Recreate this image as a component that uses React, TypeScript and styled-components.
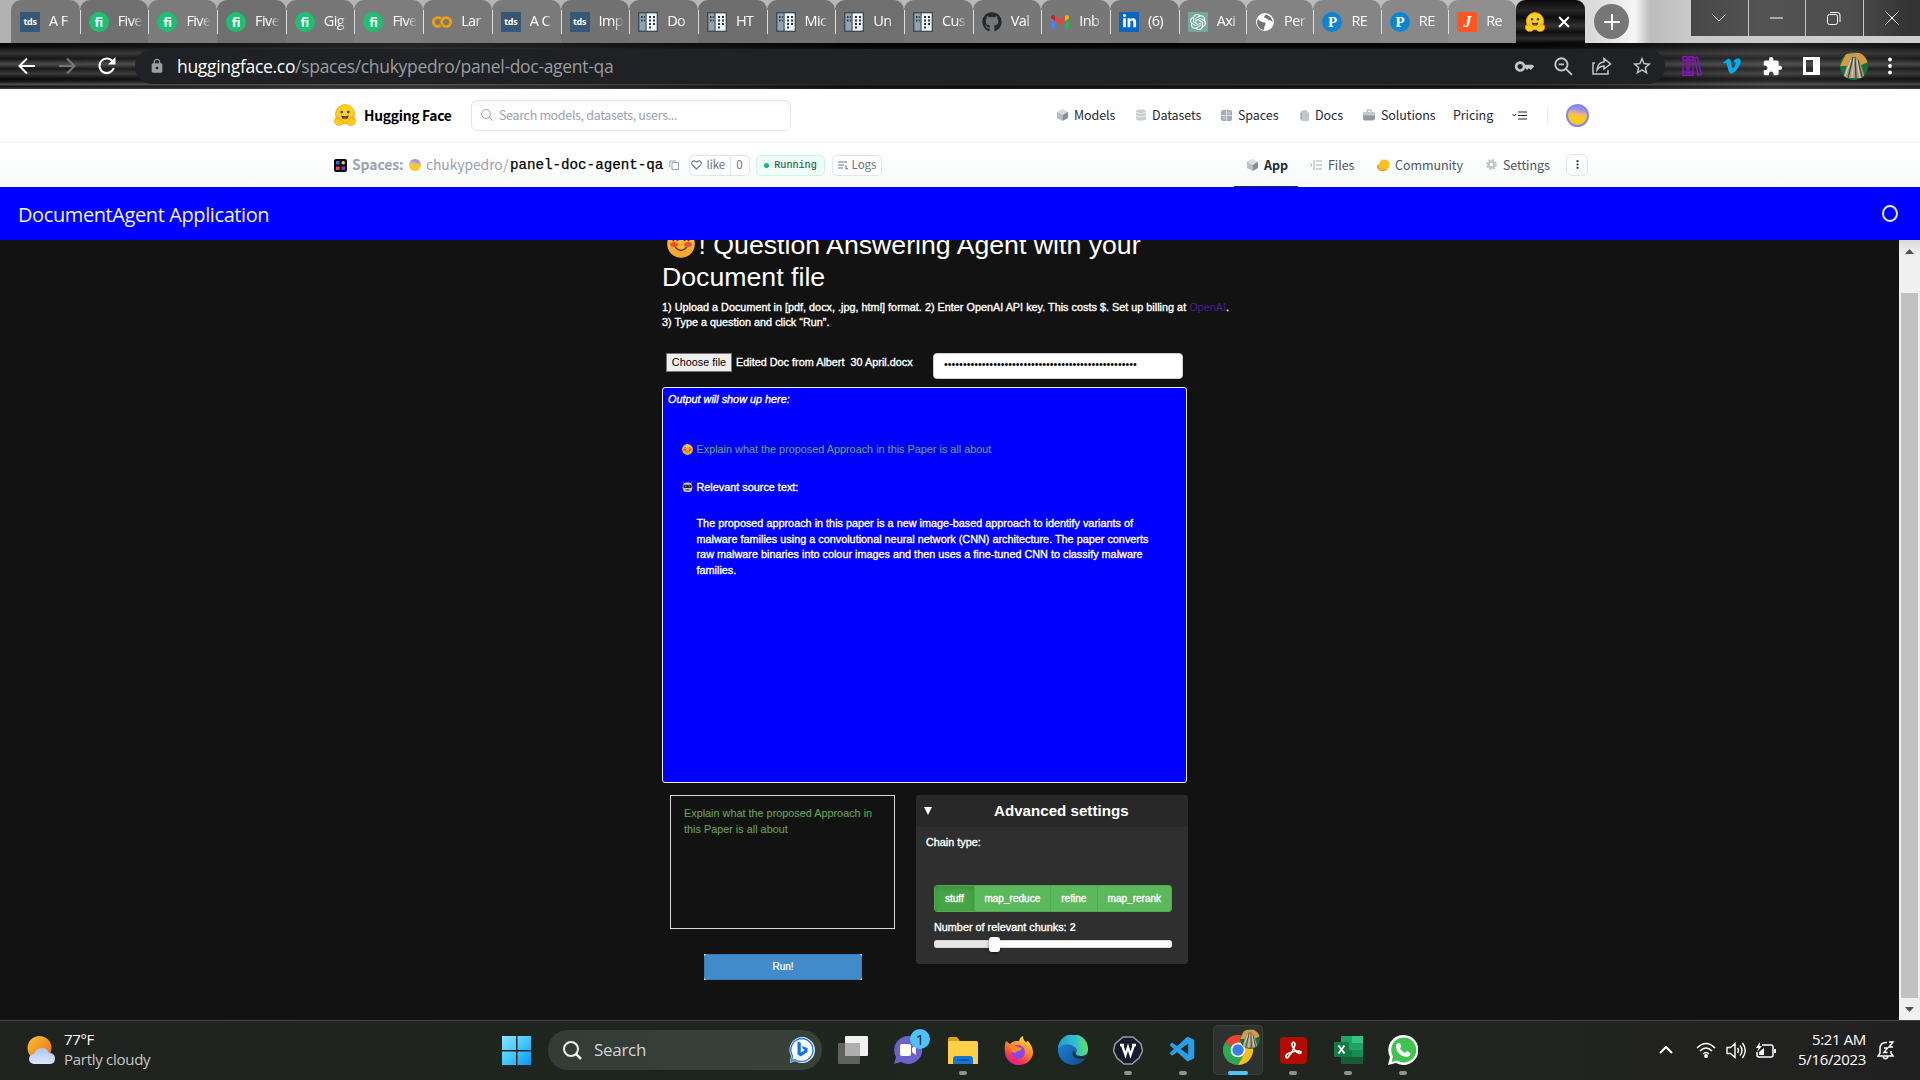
import React from "react";
import styled, { createGlobalStyle, css } from "styled-components";
import { FaGithub, FaVimeoV, FaLinkedinIn } from "react-icons/fa";
import { SiGooglecolab, SiOpenai } from "react-icons/si";
import { VscVscode } from "react-icons/vsc";
import { MdKey, MdLock, MdStarBorder, MdExtension } from "react-icons/md";

const ui = '"Open Sans", "Noto Sans", sans-serif';
const source = '"Noto Sans CJK SC", "Noto Sans", sans-serif';
const arial = '"Liberation Sans", Arial, sans-serif';
const mono = '"Liberation Mono", "DejaVu Sans Mono", monospace';

const Global = createGlobalStyle`
  * { box-sizing: border-box; }
  body { margin: 0; background: #111; overflow: hidden; }
  svg { display: block; flex: none; }
`;

const Screen = styled.div`
  width: 1920px;
  height: 1080px;
  display: grid;
  grid-template-rows: 43px 46px 54px 44px 53px 780px 60px;
  overflow: hidden;
`;

const streaks = css`
  background:
    linear-gradient(90deg, rgba(0, 0, 0, 0) 0%, rgba(120, 120, 120, 0.25) 22%, rgba(0, 0, 0, 0.5) 45%, rgba(0, 0, 0, 0.3) 80%, rgba(110, 110, 110, 0.25) 92%, rgba(60, 60, 60, 0.2) 100%),
    linear-gradient(180deg, #050505 0, #0a0a0a 8%, #333 22%, #141414 34%, #4a4a4a 46%, #161616 56%, #383838 66%, #080808 78%, #191919 84%, #4c4c4c 90%, #101010 95%, #444 100%);
`;

/* ---------- browser tab strip ---------- */

const TabStrip = styled.div`
  display: flex;
  padding-left: 11px;
  background: linear-gradient(90deg, #b2b2b2 0, #bdbdbd 1480px, #d9d9d9 1590px, #f6f6f6 1635px, #bcbcbc 1650px, #c9c9c9 1690px, #cfcfcf 100%);
`;
const Tabs = styled.div`
  display: flex;
  width: 1505px;
`;
const Tab = styled.div<{ $tone: string; $w: number }>`
  flex: none;
  width: ${(p) => p.$w}px;
  height: 43px;
  display: flex;
  align-items: center;
  border-radius: 10px 10px 0 0;
  background: ${(p) => p.$tone};
`;
const TabRule = styled.i<{ $hidden?: boolean }>`
  flex: none;
  width: 1px;
  height: 24px;
  margin-right: 8px;
  background: ${(p) => (p.$hidden ? "transparent" : "#dcdcdc")};
`;
const TabLabel = styled.span`
  width: 26px;
  margin: -2px 0 0 9px;
  white-space: nowrap;
  color: #fff;
  font: 400 14.500px/20px ${ui};
  letter-spacing: -0.600px;
  mask-image: linear-gradient(90deg, #000 55%, rgba(0, 0, 0, 0.15) 90%);
`;
const ActiveTab = styled.div`
  width: 69px;
  height: 43px;
  display: flex;
  align-items: center;
  gap: 13px;
  padding-left: 9px;
  border-radius: 9px 9px 0 0;
  background: linear-gradient(180deg, #0a0a0a, #262626 25%, #0c0c0c 40%, #333 60%, #0e0e0e 75%, #2c2c2c 90%, #080808);
`;
const NewTab = styled.div`
  width: 35px;
  height: 35px;
  margin: 4px 0 0 9px;
  border-radius: 50%;
  background: #777;
  display: grid;
  place-items: center;
`;
const WindowControls = styled.div`
  display: flex;
  width: 229px;
  height: 36px;
  margin-left: auto;
  background: linear-gradient(90deg, #474747, #535353 30%, #4d4d4d 70%, #333 95%);
`;
const Control = styled.div`
  flex: 1;
  display: grid;
  place-items: center;
  border-left: 1px solid #c6c6c6;
  &:first-child { border-left: 0; }
`;
const Favicon = styled.span<{ $bg?: string; $round?: boolean; $size?: number; $serif?: boolean }>`
  flex: none;
  width: 20px;
  height: 20px;
  display: grid;
  place-items: center;
  border-radius: ${(p) => (p.$round ? "50%" : "1px")};
  background: ${(p) => p.$bg || "transparent"};
  color: #fff;
  font: 700 ${(p) => p.$size || 10}px/18px ${(p) => (p.$serif ? '"Liberation Serif", serif' : ui)};
  letter-spacing: -0.3px;
`;

const HugIcon = ({ size = 20 }: { size?: number }) => (
  <svg width={size} height={size} viewBox="0 0 24 24">
    <circle cx="12" cy="11" r="10.3" fill="#ffd21e" stroke="#ff9d0b" strokeWidth="1" />
    <circle cx="8.4" cy="8.8" r="1.5" fill="#3a3b45" />
    <circle cx="15.6" cy="8.8" r="1.5" fill="#3a3b45" />
    <path d="M8 12.300c2.300 1.300 5.700 1.300 8 0 0 2.800-1.300 4.300-4 4.300s-4-1.500-4-4.300z" fill="#3a3b45" />
    <path d="M9.800 15.400q2.200-1.400 4.400 0-2.200 2.200-4.400 0z" fill="#ef4e4e" />
    <path d="M1.500 15.500l2 1 .4-2.500c1.300-.6 1.800.8 1.700 2.300l3.200 1.500c2.200 1.600 1.500 4.800-1.200 5.200-2.600.5-6-.1-6.600-2.600-.6-1.400-.5-3.800.5-4.900zM22.500 15.500l-2 1-.4-2.500c-1.300-.6-1.800.8-1.700 2.300l-3.200 1.500c-2.200 1.600-1.500 4.800 1.200 5.200 2.600.5 6-.1 6.600-2.600.6-1.400.5-3.800-.5-4.900z" fill="#ffd21e" stroke="#ff9d0b" strokeWidth="1" />
  </svg>
);
const Building = () => (
  <svg width="20" height="20" viewBox="0 0 20 20">
    <rect x=".7" y=".7" width="18.600" height="18.600" fill="#8fa3b3" stroke="#3f4c55" strokeWidth="1.400" />
    <rect x="8.500" y="1.500" width="10" height="17" fill="#f2f5f7" />
    <path d="M8 1v18" stroke="#3f4c55" />
    <path d="M3 5h1.500M5.800 5h1M3 8.500h1.500M5.800 8.500h1M11 5h2M15 5h2M11 8.500h2M15 8.500h2M11 12h2M15 12h2M11 15.500h2" stroke="#2b363d" strokeWidth="1.800" />
  </svg>
);
const Gmail = () => (
  <svg width="20" height="20" viewBox="0 0 20 20">
    <path d="M1 5v10.800q0 1 1 1h3V8z" fill="#4285f4" />
    <path d="M15 17h3q1 0 1-1V5l-4 3z" fill="#34a853" />
    <path d="M5 9V4l5 4 5-4v5l-5 4z" fill="#ea4335" />
    <path d="M1 5.500Q1 3 3.200 3L5 4v5L1 6z" fill="#c5221f" />
    <path d="M19 5.500Q19 3 16.800 3L15 4v5l4-3z" fill="#fbbc04" />
  </svg>
);
const Globe = () => (
  <svg width="20" height="20" viewBox="0 0 20 20">
    <circle cx="10" cy="10" r="9" fill="#fff" />
    <path d="M3 7q3 3.500 7 3.500 1.500 2-.5 3.500L9 18Q2 16.500 2 10zM11 2.500Q8.500 4 9.500 6q3 0 4 2 3 0 4 2.500Q18 5 11 2.500z" fill="#737373" />
  </svg>
);
const Five = () => <Favicon $bg="#1dbf73" $round $size={13}>fi</Favicon>;
const Tds = () => <Favicon $bg="#355876" $size={9}>tds</Favicon>;
const PIcon = () => <Favicon $bg="#0b84d3" $round $size={15} $serif>P</Favicon>;

const tabs: [React.ReactNode, string][] = [
  [<Tds />, "A F"], [<Five />, "Five"], [<Five />, "Five"], [<Five />, "Five"], [<Five />, "Gig"], [<Five />, "Five"],
  [<SiGooglecolab size={20} color="#f9a000" />, "Lar"], [<Tds />, "A C"], [<Tds />, "Imp"],
  [<Building />, "Do"], [<Building />, "HT"], [<Building />, "Mic"], [<Building />, "Un"], [<Building />, "Cus"],
  [<FaGithub size={20} color="#24292f" />, "Val"], [<Gmail />, "Inb"],
  [<Favicon $bg="#0a66c2"><FaLinkedinIn size={15} /></Favicon>, "(6)"],
  [<Favicon $bg="#74aa9c"><SiOpenai size={16} /></Favicon>, "Axi"],
  [<Globe />, "Per"], [<PIcon />, "RE"], [<PIcon />, "RE"],
  [<Favicon $bg="#ff5722" $size={16} $serif><em>J</em></Favicon>, "Re"],
];
const tones = ["#777", "#707070", "#7b7b7b", "#6f6f6f", "#767676", "#7d7d7d", "#787878", "#7a7a7a", "#727272", "#747474", "#6e6e6e", "#727272", "#6f6f6f", "#767676", "#777", "#777", "#757575", "#7b7b7b", "#838383", "#858585", "#888", "#8e8e8e"];

/* ---------- address bar ---------- */

const Toolbar = styled.div`
  ${streaks}
  display: flex;
  align-items: center;
  padding-left: 18px;
`;
const NavIcons = styled.div`
  display: flex;
  gap: 22px;
  width: 117px;
`;
const Omnibox = styled.div`
  width: 1530px;
  height: 35px;
  display: flex;
  align-items: center;
  padding: 0 12px 0 14px;
  border-radius: 18px;
  background: #202124;
  color: #c4c7c9;
`;
const Url = styled.span`
  flex: 1;
  margin: -1px 0 0 12px;
  font: 400 17.500px/24px ${ui};
  letter-spacing: -0.310px;
  color: #9a9da1;
  b { color: #fff; font-weight: 400; }
`;
const OmniActions = styled.div`
  display: flex;
  align-items: center;
  gap: 19px;
`;
const Extensions = styled.div`
  display: flex;
  align-items: center;
  gap: 20px;
  margin-left: 17px;
  color: #fff;
`;

/* ---------- Hugging Face header ---------- */

const HfBar = styled.header`
  display: flex;
  align-items: center;
  padding: 0 0 1px 334px;
  background: #fff;
  border-bottom: 1px solid #f1f2f4;
  font: 400 12.500px/20px ${source};
  letter-spacing: -0.080px;
  color: #1f2937;
`;
const Brand = styled.b`
  width: 107px;
  margin-left: 8px;
  color: #000;
  font: 700 13.800px/20px ${source};
  letter-spacing: -0.250px;
  white-space: nowrap;
`;
const SearchBox = styled.div`
  width: 320px;
  height: 31px;
  display: flex;
  align-items: center;
  gap: 6px;
  padding-left: 9px;
  border: 1px solid #e3e5e9;
  border-radius: 6px;
  background: linear-gradient(#f8f9fa, #fff 25%);
  color: #9ca3af;
  letter-spacing: -0.330px;
`;
const NavItem = styled.span<{ $w: number; $strong?: boolean; $gap?: number }>`
  width: ${(p) => p.$w}px;
  display: flex;
  align-items: center;
  gap: ${(p) => p.$gap ?? 6}px;
  white-space: nowrap;
  font-weight: ${(p) => (p.$strong ? 700 : 400)};
  color: ${(p) => (p.$strong ? "#1f2937" : "inherit")};
`;
const MainNav = styled.nav`
  display: flex;
  align-items: center;
  margin-left: 266px;
`;
const NavDivider = styled.i`
  width: 1px;
  height: 17px;
  margin-right: 18px;
  background: #e8eaed;
`;
const Avatar = styled.span<{ $size: number; $ring?: boolean }>`
  flex: none;
  width: ${(p) => p.$size}px;
  height: ${(p) => p.$size}px;
  border-radius: 50%;
  background: linear-gradient(190deg, #938ff0 20%, #f3b57f 42%, #facc15 60%);
  border: ${(p) => (p.$ring ? "2px solid #8187f0" : "0")};
`;
const SpaceBar = styled.div`
  display: flex;
  align-items: center;
  padding-left: 334px;
  background: linear-gradient(#fff, #f8fafa);
  font: 400 12.500px/18px ${source};
  letter-spacing: -0.080px;
  color: #4b5563;
`;
const SpaceLabel = styled.span<{ $w: number; $ml?: number; $bold?: boolean }>`
  width: ${(p) => p.$w}px;
  margin: -2px 0 0 ${(p) => p.$ml || 0}px;
  font: ${(p) => (p.$bold ? 700 : 400)} 13.900px/20px ${source};
  color: #9ca3af;
  white-space: nowrap;
`;
const RepoName = styled.span`
  width: 159px;
  color: #000;
  font: 400 14.200px/20px ${mono};
  letter-spacing: 0;
  -webkit-text-stroke: 0.250px #000;
`;
const Pill = styled.span<{ $w: number; $ml: number }>`
  width: ${(p) => p.$w}px;
  height: 21px;
  margin-left: ${(p) => p.$ml}px;
  display: flex;
  align-items: center;
  justify-content: center;
  gap: 4px;
  border: 1px solid #e2e5e9;
  border-radius: 5px;
  background: #fff;
  color: #6b7280;
  font: 400 11.600px/17px ${source};
`;
const PillText = styled.span`
  margin-top: -2px;
`;
const LikeCount = styled.span`
  height: 19px;
  padding: 0 5px;
  margin-left: 1px;
  border-left: 1px solid #e2e5e9;
`;
const Running = styled(Pill)`
  background: #effdf6;
  border-color: #cdf6e0;
  color: #15684c;
  gap: 5px;
  font: 400 10.100px/19px ${mono};
  letter-spacing: 0;
  -webkit-text-stroke: 0.150px #15684c;
  &::before { content: ""; width: 5px; height: 5px; border-radius: 50%; background: #10b981; }
`;
const SpaceNav = styled.nav`
  display: flex;
  align-self: stretch;
  align-items: center;
  margin-left: 352px;
  padding-bottom: 1px;
`;
const AppTab = styled.div`
  width: 64px;
  height: 44px;
  margin: 1px 12px 0 0;
  padding-left: 13px;
  display: flex;
  border-bottom: 1px solid #1f2937;
`;
const MoreButton = styled.span`
  width: 22px;
  height: 22px;
  display: grid;
  place-items: center;
  border: 1px solid #e2e5e9;
  border-radius: 6px;
`;
const Cube = () => (
  <svg width="11" height="12" viewBox="0 0 11 12">
    <path d="M5.500 0L11 2.800 5.500 6 0 2.800z" fill="#d9dce1" /><path d="M0 2.800L5.500 6v6L0 9z" fill="#b9bec6" /><path d="M11 2.800L5.500 6v6L11 9z" fill="#878d98" />
  </svg>
);
const Drum = () => (
  <svg width="10" height="12" viewBox="0 0 10 12"><rect y=".5" width="10" height="11" rx="2.500" fill="#c9cdd4" /><path d="M0 3.500q5 2 10 0M0 7q5 2 10 0" stroke="#eceef1" fill="none" /></svg>
);
const Grid4 = () => (
  <svg width="11" height="11" viewBox="0 0 11 11"><rect width="11" height="11" rx="2" fill="#a5abb5" /><path d="M5.500 0v11M0 5.500h11" stroke="#fff" strokeWidth=".7" /><circle cx="8" cy="3" r="1.400" fill="#c6cad1" /><circle cx="3" cy="8" r="1.300" fill="#c6cad1" /></svg>
);
const Pages = () => (
  <svg width="9" height="12" viewBox="0 0 9 12"><path d="M2 1.500h2Q5 0 6.500 1.500L9 4v6.500Q9 12 7.500 12h-5Q0 12 0 10V4z" fill="#c2c7ce" /><path d="M1.500 4v6" stroke="#9ca3af" /></svg>
);
const Briefcase = () => (
  <svg width="12" height="12" viewBox="0 0 12 12"><path d="M4 3V1h4v2" fill="none" stroke="#9ca3af" /><rect y="3" width="12" height="8.500" rx="2" fill="#9299a5" /><path d="M0 5q0-2 2-2h8q2 0 2 2v1.500H0z" fill="#c3c7ce" /></svg>
);
const Indent = () => (
  <svg width="12" height="10" viewBox="0 0 12 10" fill="none" stroke="#a9afb9"><path d="M.5 3.500L2 5 .5 6.500M4 0v10M6 1h6M6 5h6M6 9h6" /></svg>
);
const Gear = () => (
  <svg width="11" height="11" viewBox="0 0 11 11"><circle cx="5.500" cy="5.500" r="3" fill="none" stroke="#c0c5cd" strokeWidth="2.500" /><circle cx="5.500" cy="5.500" r="4.700" fill="none" stroke="#c0c5cd" strokeWidth="1.500" strokeDasharray="2 1.700" /></svg>
);
const Clap = () => (
  <svg width="13" height="12" viewBox="0 0 13 12"><path d="M1 6L4 1.500Q5 0 6.500 1L10 .8q2.500 1.200 2.500 4.700 0 4-3 5.500-4 1.500-7.500 0Q-.5 9 1 6z" fill="#fbbf24" /><path d="M1 6Q0 10 3 11t6.500-.5" fill="none" stroke="#f08c1a" strokeWidth="1.200" /></svg>
);

/* ---------- application ---------- */

const AppBar = styled.div`
  display: flex;
  align-items: center;
  justify-content: space-between;
  padding: 3px 22px 0 18px;
  background: #0000ff;
  color: #f0f0ff;
  font: 400 20px/28px ${ui};
  letter-spacing: -0.400px;
`;
const Ring = styled.i`
  width: 16px;
  height: 17px;
  margin-top: -4px;
  border: 2px solid #e8e8ff;
  border-radius: 50%;
`;
const Viewport = styled.div`
  display: flex;
  overflow: hidden;
  background: #121212;
`;
const Content = styled.main`
  flex: 1;
  padding-left: 662px;
  overflow: hidden;
  color: #fff;
  font: 400 10.800px/15.500px ${arial};
  letter-spacing: 0.022px;
  -webkit-text-stroke: 0.350px currentColor;
`;
const Heading = styled.h1`
  width: 525px;
  height: 64px;
  margin: -11.500px 0 7.500px;
  font: 400 26.700px/32px ${arial};
  letter-spacing: 0;
  -webkit-text-stroke: 0;
  svg { display: inline-block; margin: 0 4px 0 4.500px; vertical-align: -4px; }
`;
const Intro = styled.p`
  width: 580px;
  margin: 0 0 22px;
  line-height: 15px;
  padding-bottom: 1px;
  white-space: nowrap;
  a { color: #551a8b; -webkit-text-stroke: 0; }
`;
const InputRow = styled.div`
  display: flex;
  height: 26px;
  margin-bottom: 8px;
  padding-left: 4px;
`;
const FileButton = styled.span`
  width: 66px;
  height: 19px;
  border: 1px solid #767676;
  background: #efefef;
  color: #000;
  text-align: center;
  line-height: 17px;
  -webkit-text-stroke: 0;
`;
const FileName = styled.span`
  width: 197px;
  margin-left: 4px;
  line-height: 19px;
  white-space: pre;
`;
const Password = styled.div`
  width: 250px;
  height: 26px;
  padding-left: 10px;
  border: 1px solid #ccc;
  border-radius: 4px;
  background: #fff;
  color: #000;
  line-height: 21px;
  letter-spacing: 0;
  -webkit-text-stroke: 0;
`;
const Output = styled.section`
  width: 525px;
  height: 396px;
  padding: 4px 5px;
  border: 1px solid #f0f0f0;
  border-radius: 3px;
  background: #0000ff;
`;
const Message = styled.div<{ $top: number; $green?: boolean }>`
  display: flex;
  align-items: center;
  gap: 4px;
  margin: ${(p) => p.$top}px 0 0 13.500px;
  color: ${(p) => (p.$green ? "#66a274" : "#fff")};
  -webkit-text-stroke-width: ${(p) => (p.$green ? 0.1 : 0.35)}px;
`;
const Answer = styled.p`
  width: 470px;
  margin: 21px 0 0 28.500px;
  line-height: 15.700px;
  white-space: pre-line;
`;
const Lower = styled.div`
  display: flex;
  margin-top: 12px;
`;
const AskColumn = styled.div`
  width: 254px;
  display: flex;
  flex-direction: column;
  padding-left: 8px;
`;
const Question = styled.div`
  width: 225px;
  height: 134px;
  padding: 9px 13px;
  border: 1px solid #d8d8d8;
  color: #67a253;
  line-height: 16px;
  -webkit-text-stroke: 0.100px currentColor;
`;
const Run = styled.div`
  width: 158px;
  height: 26px;
  margin: 25px 0 0 34px;
  background: #fff;
  span {
    display: block;
    height: 26px;
    border: 1px solid #357ebd;
    border-radius: 3px;
    background: #428bca;
    text-align: center;
    font-size: 10px;
    line-height: 24px;
    -webkit-text-stroke: 0.200px #fff;
  }
`;
const Card = styled.section`
  width: 272px;
  height: 169px;
  border-radius: 3px;
  background: #2f2f2f;
  overflow: hidden;
`;
const CardHeader = styled.header`
  height: 32px;
  display: flex;
  align-items: center;
  padding-left: 8px;
  background: #282828;
  font: 700 15.100px/32px ${arial};
  -webkit-text-stroke: 0;
  span { margin-left: 62px; }
`;
const CardLabel = styled.div`
  margin: 8px 0 0 10px;
`;
const Choices = styled.div`
  display: flex;
  width: 238px;
  height: 27px;
  margin: 34px 0 0 18px;
  border-radius: 3px;
  overflow: hidden;
  border: 1px solid #4cae4c;
  font-size: 10px;
  line-height: 25px;
`;
const Choice = styled.span<{ $w: number; $on?: boolean }>`
  width: ${(p) => p.$w}px;
  text-align: center;
  border-left: 1px solid #4cae4c;
  background: ${(p) => (p.$on ? "#47a447" : "#5cb85c")};
  box-shadow: ${(p) => (p.$on ? "inset 0 3px 5px rgba(0,0,0,.125)" : "none")};
  &:first-child { border-left: 0; }
`;
const SliderLabel = styled.div`
  margin: 7px 0 2px 18px;
  line-height: 16px;
  b { -webkit-text-stroke: 0; }
`;
const Slider = styled.div`
  width: 238px;
  height: 15px;
  margin-left: 18px;
  display: flex;
  align-items: center;
`;
const Track = styled.i<{ $w: number; $fill?: boolean }>`
  width: ${(p) => p.$w}px;
  height: 8px;
  background: ${(p) => (p.$fill ? "#e5e5e5" : "#fafafa")};
  border: solid #d5d5d5;
  border-width: 1px 0;
  border-radius: ${(p) => (p.$fill ? "3px 0 0 3px" : "0 3px 3px 0")};
`;
const Handle = styled.i`
  width: 11px;
  height: 15px;
  border-radius: 3px;
  background: #fff;
  box-shadow: 0 1px 3px rgba(0, 0, 0, 0.5);
`;
const Scrollbar = styled.div`
  width: 21px;
  display: flex;
  flex-direction: column;
  align-items: center;
  justify-content: space-between;
  padding: 9px 0 8px;
  background: linear-gradient(#dadada, #f0f0f0 14px);
`;
const Thumb = styled.i`
  width: 17px;
  height: 705px;
  margin-top: 30px;
  background: #c1c1c1;
`;

/* ---------- task bar ---------- */

const Taskbar = styled.footer`
  display: flex;
  align-items: center;
  padding-bottom: 1px;
  border-top: 1px solid #444;
  background: linear-gradient(90deg, #20221f 0, #1e251e 35%, #1e261e 58%, #222420 80%, #202020 100%);
  color: #fff;
  font: 400 15px/20px ${ui};
`;
const Weather = styled.div`
  display: flex;
  align-items: center;
  gap: 9px;
  width: 475px;
  padding: 0 0 2px 27px;
  letter-spacing: -0.350px;
  small { display: block; font-size: 15px; color: #c6c8c5; letter-spacing: -0.280px; }
`;
const WinLogo = styled.svg`
  margin-left: 27px;
`;
const TaskSearch = styled.div`
  width: 274px;
  height: 40px;
  display: flex;
  align-items: center;
  margin-left: 17px;
  padding: 0 7px 0 15px;
  border-radius: 20px;
  background: linear-gradient(90deg, #343c36, #38403a);
  color: #d3d6d3;
  font-size: 17px;
  span { flex: 1; margin-left: 12px; letter-spacing: -0.300px; }
`;
const TaskIcons = styled.div`
  display: flex;
  margin-left: 6px;
`;
const Slot = styled.div<{ $open?: boolean; $active?: boolean }>`
  position: relative;
  width: 50px;
  height: 50px;
  margin-right: 5.050px;
  display: grid;
  place-items: center;
  border-radius: 5px;
  background: ${(p) => (p.$active ? "#2d322e" : "transparent")};
  box-shadow: ${(p) => (p.$active ? "inset 0 0 0 1px #3c403d" : "none")};
  &::after {
    content: "";
    position: absolute;
    bottom: 0;
    left: 50%;
    width: ${(p) => (p.$active ? 20 : 8)}px;
    height: 4px;
    transform: translateX(-50%);
    border-radius: 2px;
    background: ${(p) => (p.$active ? "#4cc2ff" : p.$open ? "#8f938f" : "transparent")};
  }
`;
const Badge = styled.span<{ $plain?: boolean }>`
  position: absolute;
  top: 4px;
  right: 3px;
  width: 20px;
  height: 20px;
  border-radius: 50%;
  background: ${(p) => (p.$plain ? "none" : "#4cc2ff")};
  color: #111;
  text-align: center;
  font-size: 15px;
`;
const Tray = styled.div`
  display: flex;
  align-items: center;
  margin-left: auto;
  padding: 0 25px 0 0;
`;
const TrayGroup = styled.div`
  display: flex;
  align-items: center;
  gap: 10px;
  margin-left: 23px;
`;
const Clock = styled.div`
  width: 90px;
  margin: -2px 11px 0 0;
  text-align: right;
  letter-spacing: -0.350px;
`;

const Smile = ({ size }: { size: number }) => (
  <svg width={size} height={size} viewBox="0 0 28 28">
    <defs><linearGradient id="sm" x2="0" y2="1"><stop stopColor="#ffc83d" /><stop offset="1" stopColor="#f5a32a" /></linearGradient></defs>
    <circle cx="14" cy="14" r="13.800" fill="url(#sm)" />
    <path d="M6 11q2.500-4 5 0M17 11q2.500-4 5 0" stroke="#5c3516" strokeWidth="1.700" fill="none" />
    <ellipse cx="7" cy="14.500" rx="3.800" ry="2.500" fill="#f04b3a" /><ellipse cx="21" cy="14.500" rx="3.800" ry="2.500" fill="#f04b3a" />
    <path d="M8.500 17.500q5.500 6 11 0" stroke="#6d3a12" strokeWidth="1.600" fill="none" strokeLinecap="round" />
  </svg>
);
const Robot = () => (
  <svg width="11" height="12" viewBox="0 0 12 12">
    <path d="M1 0l1.500 2.500M11 0L9.500 2.500M0 5v3M12 5v3" stroke="#e44" />
    <rect x="1" y="1" width="10" height="10.500" rx="4" fill="#c9c6d6" /><rect x="1.500" y="3.500" width="9" height="3.500" rx="1" fill="#222" />
    <circle cx="4" cy="5" r=".7" fill="#8bd" /><circle cx="8" cy="5" r=".7" fill="#8bd" /><rect x="4" y="8.500" width="4" height="1.200" fill="#333" />
  </svg>
);
const Pyramid = ({ size }: { size: number }) => (
  <svg width={size} height={size} viewBox="0 0 28 28">
    <clipPath id="pc"><circle cx="14" cy="14" r="14" /></clipPath>
    <g clipPath="url(#pc)"><rect width="28" height="28" fill="#17703a" /><path d="M0 14L6 2l20-2 2 10-9 4z" fill="#d99a3d" /><path d="M14 3l5 3 6 20H3L9 7z" fill="#a69c82" /><path d="M13 5L8 26M15 5l1 21M18 8l4 17" stroke="#4a4538" strokeWidth="1.300" /><path d="M11 8l-6 16M14 6l-2 20M17 8l3 18" stroke="#ddd6c0" strokeWidth="1" /></g>
  </svg>
);
const line = { fill: "none", stroke: "currentColor" } as const;

export default function App() {
  return (
    <Screen>
      <Global />
      <TabStrip>
        <Tabs>
          {tabs.map(([icon, label], i) => (
            <Tab key={i} $tone={tones[i]} $w={i < 17 ? 68.7 : 67.4}>
              <TabRule $hidden={i === 0} />
              {icon}
              <TabLabel>{label}</TabLabel>
            </Tab>
          ))}
        </Tabs>
        <ActiveTab>
          <HugIcon />
          <svg width="12" height="12" viewBox="0 0 12 12" stroke="#fff" strokeWidth="2"><path d="M1 1l10 10M11 1L1 11" /></svg>
        </ActiveTab>
        <NewTab><svg width="16" height="16" viewBox="0 0 16 16" stroke="#fff" strokeWidth="2"><path d="M8 0v16M0 8h16" /></svg></NewTab>
        <WindowControls>
          <Control><svg width="14" height="8" viewBox="0 0 14 8" fill="none" stroke="#e6e6e6"><path d="M.5.5L7 7 13.500.5" /></svg></Control>
          <Control><svg width="13" height="2" viewBox="0 0 13 2"><path d="M0 1h13" stroke="#fff" /></svg></Control>
          <Control><svg width="14" height="13" viewBox="0 0 14 13" fill="none" stroke="#fff"><rect x=".5" y="2.500" width="10" height="10" rx="2" /><path d="M3 .5h7.500q2.500 0 2.500 2.500v7" /></svg></Control>
          <Control><svg width="14" height="14" viewBox="0 0 14 14" stroke="#fff"><path d="M.5.5l13 13M13.500.5L.5 13.500" /></svg></Control>
        </WindowControls>
      </TabStrip>

      <Toolbar>
        <NavIcons>
          <svg width="18" height="18" viewBox="0 0 18 18" fill="none" stroke="#fff" strokeWidth="2"><path d="M17 9H2M9 1.500L1.500 9 9 16.500" /></svg>
          <svg width="18" height="18" viewBox="0 0 18 18" fill="none" stroke="#777" strokeWidth="2"><path d="M1 9h15M9 1.500L16.500 9 9 16.500" /></svg>
          <svg width="18" height="18" viewBox="0 0 18 18" fill="none" stroke="#fff" strokeWidth="2.200"><path d="M15.800 11A7.300 7.300 0 1 1 14.500 4.200L16 6" /><path d="M17.500 0v7.500H10z" fill="#fff" stroke="none" /></svg>
        </NavIcons>
        <Omnibox>
          <MdLock size={16} color="#9aa0a6" />
          <Url><b>huggingface.co</b>/spaces/chukypedro/panel-doc-agent-qa</Url>
          <OmniActions>
            <MdKey size={21} />
            <svg width="19" height="19" viewBox="0 0 18 18" {...line} strokeWidth="1.800"><circle cx="7" cy="7" r="5.800" /><path d="M11.300 11.300L17 17M4.500 7h5" /></svg>
            <svg width="20" height="18" viewBox="0 0 20 18" {...line} strokeWidth="1.500"><path d="M3 6H1v11h15v-4M5 13q1-8 7-8V1.500L18.500 7 12 12V9Q8 9 5 13z" /></svg>
            <MdStarBorder size={22} />
          </OmniActions>
        </Omnibox>
        <Extensions>
          <svg width="20" height="20" viewBox="0 0 20 20" fill="none" stroke="#8a12c4" strokeWidth="1.400"><path d="M1 .8h4v18.400H1zM7 .8h4v18.400H7zM12.500 2l3-.8 3.700 17-3 .9zM1 4h4M1 16h4M7 4h4M7 16h4" /></svg>
          <FaVimeoV size={20} color="#00adef" />
          <MdExtension size={21} />
          <svg width="17" height="18" viewBox="0 0 17 18"><path d="M1.500 1.500h14v15h-14z" fill="none" stroke="#fff" strokeWidth="3" /><path d="M10 1h6v16h-6z" fill="#fff" /></svg>
          <Pyramid size={28} />
          <svg width="4" height="18" viewBox="0 0 4 18" fill="#fff"><circle cx="2" cy="2.500" r="1.900" /><circle cx="2" cy="9" r="1.900" /><circle cx="2" cy="15.500" r="1.900" /></svg>
        </Extensions>
      </Toolbar>

      <HfBar>
        <HugIcon size={22} />
        <Brand>Hugging Face</Brand>
        <SearchBox>
          <svg width="12" height="12" viewBox="0 0 12 12" {...line}><circle cx="5" cy="5" r="4.400" /><path d="M8.200 8.200l3.500 3.500" /></svg>
          Search models, datasets, users...
        </SearchBox>
        <MainNav>
          <NavItem $w={79}><Cube />Models</NavItem>
          <NavItem $w={85}><Drum />Datasets</NavItem>
          <NavItem $w={79}><Grid4 />Spaces</NavItem>
          <NavItem $w={63}><Pages />Docs</NavItem>
          <NavItem $w={90}><Briefcase />Solutions</NavItem>
          <NavItem $w={59}>Pricing</NavItem>
          <NavItem $w={35}><svg width="15" height="9" viewBox="0 0 15 9" {...line}><path d="M.5 3l1.800 2 1.800-2M6 1h9M6 4.500h9M6 8h9" /></svg></NavItem>
          <NavDivider />
          <Avatar $size={23} $ring />
        </MainNav>
      </HfBar>

      <SpaceBar>
        <svg width="13" height="13" viewBox="0 0 13 13"><rect width="13" height="13" rx="2" fill="#080808" /><rect x="2" y="2" width="3.500" height="3.500" fill="#2f6df0" /><rect x="7.500" y="2" width="3.500" height="3.500" rx="1.700" fill="#fbd11c" /><rect x="2" y="7.500" width="3.500" height="3.500" fill="#ef4468" /><rect x="7.500" y="7.500" width="3.500" height="3.500" fill="#7c34dc" /></svg>
        <SpaceLabel $w={57} $ml={5} $bold>Spaces:</SpaceLabel>
        <Avatar $size={12} />
        <SpaceLabel $w={77} $ml={5}>chukypedro</SpaceLabel>
        <SpaceLabel $w={7}>/</SpaceLabel>
        <RepoName>panel-doc-agent-qa</RepoName>
        <svg width="10" height="10" viewBox="0 0 10 10" fill="none" stroke="#9ca3af"><path d="M3 2.500h6.500v7H3zM7 1H.8v6" /></svg>
        <Pill $w={61} $ml={10}>
          <svg width="11" height="10" viewBox="0 0 11 10" {...line} strokeWidth="1.100"><path d="M5.500 9L1.300 4.800Q0 3 1.500 1.400q2-1.500 4 .8 2-2.300 4-.8 1.500 1.600.2 3.400z" /></svg>
          <PillText>like</PillText><LikeCount>0</LikeCount>
        </Pill>
        <Running $w={69} $ml={6}>Running</Running>
        <Pill $w={50} $ml={7}><svg width="10" height="9" viewBox="0 0 10 9" {...line}><path d="M0 1h9M0 4h6M0 7h5M8 4v4.500l2-1.500" /></svg><PillText>Logs</PillText></Pill>
        <SpaceNav>
          <AppTab><NavItem $w={40} $strong><Cube />App</NavItem></AppTab>
          <NavItem $w={67}><Indent />Files</NavItem>
          <NavItem $w={109} $gap={5}><Clap />Community</NavItem>
          <NavItem $w={80}><Gear />Settings</NavItem>
          <MoreButton><svg width="3" height="9" viewBox="0 0 3 9" fill="#333"><circle cx="1.500" cy="1.200" r="1.100" /><circle cx="1.500" cy="4.500" r="1.100" /><circle cx="1.500" cy="7.800" r="1.100" /></svg></MoreButton>
        </SpaceNav>
      </SpaceBar>

      <AppBar>DocumentAgent Application<Ring /></AppBar>

      <Viewport>
        <Content>
          <Heading><Smile size={28} />! Question Answering Agent with your<br />Document file</Heading>
          <Intro>
            1) Upload a Document in [pdf, docx, .jpg, html] format. 2) Enter OpenAI API key. This costs $. Set up billing at <a>OpenAI</a>.<br />
            3) Type a question and click “Run”.
          </Intro>
          <InputRow>
            <FileButton>Choose file</FileButton>
            <FileName>{"Edited Doc from Albert  30 April.docx"}</FileName>
            <Password>{"•".repeat(51)}</Password>
          </InputRow>
          <Output>
            <em>Output will show up here:</em>
            <Message $top={34} $green><Smile size={11} />Explain what the proposed Approach in this Paper is all about</Message>
            <Message $top={22.5}><Robot />Relevant source text:</Message>
            <Answer>{"The proposed approach in this paper is a new image-based approach to identify variants of\nmalware families using a convolutional neural network (CNN) architecture. The paper converts\nraw malware binaries into colour images and then uses a fine-tuned CNN to classify malware\nfamilies."}</Answer>
          </Output>
          <Lower>
            <AskColumn>
              <Question>Explain what the proposed Approach in this Paper is all about</Question>
              <Run><span>Run!</span></Run>
            </AskColumn>
            <Card>
              <CardHeader><svg width="8" height="8" viewBox="0 0 8 8"><path d="M0 0h8L4 8z" fill="#fff" /></svg><span>Advanced settings</span></CardHeader>
              <CardLabel>Chain type:</CardLabel>
              <Choices>
                <Choice $w={39} $on>stuff</Choice>
                <Choice $w={77}>map_reduce</Choice>
                <Choice $w={47}>refine</Choice>
                <Choice $w={75}>map_rerank</Choice>
              </Choices>
              <SliderLabel>Number of relevant chunks: <b>2</b></SliderLabel>
              <Slider><Track $w={55} $fill /><Handle /><Track $w={172} /></Slider>
            </Card>
          </Lower>
        </Content>
        <Scrollbar>
          <svg width="9" height="5" viewBox="0 0 9 5"><path d="M0 5L4.500 0 9 5z" fill="#505050" /></svg>
          <Thumb />
          <svg width="9" height="5" viewBox="0 0 9 5"><path d="M0 0l4.500 5L9 0z" fill="#505050" /></svg>
        </Scrollbar>
      </Viewport>

      <Taskbar>
        <Weather>
          <svg width="28" height="29" viewBox="0 0 28 29">
            <defs><linearGradient id="sun" x2="1" y2="1"><stop stopColor="#f5c53a" /><stop offset="1" stopColor="#f0680c" /></linearGradient><linearGradient id="cl" x2="0" y2="1"><stop stopColor="#a9c4f5" /><stop offset="1" stopColor="#dde8fb" /></linearGradient></defs>
            <circle cx="12.500" cy="13" r="12" fill="url(#sun)" /><path d="M7 29a5 5 0 0 1 0-10q2-6 8-6 5 0 7 5 6 0 6 5.500T22 29z" fill="url(#cl)" />
          </svg>
          <div>77°F<small>Partly cloudy</small></div>
        </Weather>
        <WinLogo width="29" height="29" viewBox="0 0 29 29">
          <defs><linearGradient id="wn" x2="1" y2="1"><stop stopColor="#8be3ff" /><stop offset=".5" stopColor="#45c8ff" /><stop offset="1" stopColor="#0693ff" /></linearGradient></defs>
          <path d="M0 0h14v14H0zM15.500 0H29v14H15.500zM0 15.500h14V29H0zM15.500 15.500H29V29H15.500z" fill="url(#wn)" />
        </WinLogo>
        <TaskSearch>
          <svg width="19" height="19" viewBox="0 0 19 19" fill="none" stroke="#f0f0f0" strokeWidth="2"><circle cx="8" cy="8" r="7" /><path d="M13 13l5 5" strokeWidth="2.500" /></svg>
          <span>Search</span>
          <svg width="26" height="26" viewBox="0 0 26 26"><path d="M13 0a13 13 0 1 1-7 24l-5 2 1-7A13 13 0 0 1 13 0z" fill="#fff" /><path d="M13 1.500A11.500 11.500 0 1 1 6 22.500l-3.500 1.500 1-5A11.500 11.500 0 0 1 13 1.500z" fill="none" stroke="#2583e4" strokeWidth="1.500" /><path d="M8.500 4.500l3.300 1.300v9.700l4.200-2.400-2-1-1.200-3.200 5.700 2.200v4l-6.800 4.400-3.200-2z" fill="#1473e6" /></svg>
        </TaskSearch>
        <TaskIcons>
          <Slot><svg width="30" height="28" viewBox="0 0 30 28"><rect y="7" width="22" height="21" rx="1" fill="#5f625f" /><rect x="7" width="23" height="20" rx="1" fill="#f0f0f0" /><path d="M7 7h15v13H7z" fill="#adafad" /></svg></Slot>
          <Slot><svg width="29" height="28" viewBox="0 0 29 28"><path d="M14 0a14 14 0 1 1-7 26l-7 2 2-7A14 14 0 0 1 14 0z" fill="#6a62c8" /><rect x="6" y="8" width="11" height="12" rx="2" fill="#fff" /><path d="M18 12l4-3v10l-4-3z" fill="#fff" /></svg><Badge>1</Badge></Slot>
          <Slot $open><svg width="30" height="27" viewBox="0 0 30 27"><path d="M0 2q0-2 2-2h7l3 4H0z" fill="#e0a012" /><path d="M0 4h28q2 0 2 2v21H0z" fill="#ffd047" /><path d="M5 27v-5q0-3 3-3h14q3 0 3 3v5z" fill="#1376d0" /><path d="M9 23h12" stroke="#0a5197" strokeWidth="1.500" /></svg></Slot>
          <Slot>
            <svg width="29" height="29" viewBox="0 0 29 29"><defs><linearGradient id="ff" x1=".8" x2=".3" y2="1"><stop stopColor="#ffe04a" /><stop offset=".45" stopColor="#ff8b22" /><stop offset=".8" stopColor="#f53354" /><stop offset="1" stopColor="#e0189a" /></linearGradient></defs><path d="M2 5l4 3q3-3 6-3 3 0 3 0 1-4 4-5 0 4 3 6l2-1q5 6 5 11a14 13 0 0 1-28 0Q0 10 2 5z" fill="url(#ff)" /><circle cx="14" cy="16" r="7" fill="#8a46e8" /><path d="M5 10q4-2 9 1l4 1q-1 3-5 3-1 3-5 1z" fill="#ff8b22" /></svg>
          </Slot>
          <Slot>
            <svg width="30" height="30" viewBox="0 0 30 30"><defs><linearGradient id="ed" x2="1"><stop stopColor="#1b9de2" /><stop offset=".6" stopColor="#35c1c4" /><stop offset="1" stopColor="#62e35a" /></linearGradient><linearGradient id="eb" x2="1" y2="1"><stop stopColor="#1a8be0" /><stop offset="1" stopColor="#114a8b" /></linearGradient></defs><circle cx="15" cy="15" r="15" fill="url(#eb)" /><path d="M0 13a15 15 0 0 1 30 2q-.5 6-7.500 6-4 0-5-2.500 3-3 0-6Q9 6 0 13z" fill="url(#ed)" /><path d="M17.500 18.500q1 2.500 5 2.500 5 0 6.500-2 0 2-1.500 4.500-7 2-12-2-2-3 0-6z" fill="#1e251e" opacity=".8" /></svg>
          </Slot>
          <Slot $open><svg width="30" height="29" viewBox="0 0 30 29"><path d="M10 1h10l8 7 1.500 7-3.500 7-7 6h-8l-7-6L.5 15 2 8z" fill="#171a2a" stroke="#9699a5" strokeWidth="1.500" /><path d="M7 9h4M19 9h4M9 9l3.500 10L15 11l2.500 8L21 9" fill="none" stroke="#fff" strokeWidth="2.300" /></svg></Slot>
          <Slot $open><VscVscode size={30} color="#269ee8" /></Slot>
          <Slot $open $active>
            <svg width="30" height="30" viewBox="0 0 30 30"><path d="M15 15L2 7.500A15 15 0 0 1 28 7.500z" fill="#ea4335" /><path d="M15 15L2 7.500A15 15 0 0 0 15 30l6.500-11z" fill="#2da94f" /><path d="M15 30A15 15 0 0 0 28 7.500H15l6.500 11z" fill="#fbc116" /><circle cx="15" cy="15" r="7.300" fill="#fff" /><circle cx="15" cy="15" r="5.700" fill="#3b7ded" /></svg>
            <Badge $plain><Pyramid size={20} /></Badge>
          </Slot>
          <Slot $open><svg width="27" height="27" viewBox="0 0 27 27"><rect width="27" height="27" rx="4" fill="#b30b00" /><path d="M6 20q-1-3 6-5 7-2 9 0 0 3-4 0-5-4-5-8 1-4 3 0 0 4-6 12-2 3-3 1z" fill="none" stroke="#fff" strokeWidth="1.700" /></svg></Slot>
          <Slot $open><svg width="29" height="28" viewBox="0 0 29 28"><rect x="7" width="22" height="28" rx="1" fill="#21a366" /><path d="M18 0h11v7H18z" fill="#33c481" /><path d="M7 14h11v7H7z" fill="#107c41" /><path d="M18 14h11v7H18z" fill="#13904f" /><path d="M7 21h22v7H7z" fill="#185c37" /><rect y="6" width="15" height="15" rx="1" fill="#107c41" /><path d="M4.500 9.500l6 8M10.500 9.500l-6 8" stroke="#fff" strokeWidth="2" /></svg></Slot>
          <Slot $open><svg width="30" height="30" viewBox="0 0 30 30"><path d="M15 0a15 15 0 1 1-7 28l-8 2 2-8A15 15 0 0 1 15 0z" fill="#fff" /><path d="M15 2.500a12.500 12.500 0 1 1-6 23l-5.500 1.500L5 21.500a12.500 12.500 0 0 1 10-19z" fill="#40c351" /><path d="M10 8h2l1.500 3.500-1.500 2q2 3.500 5 4.500l2-2 3.500 2q0 3.500-4 4Q9 20.500 8 12q0-3 2-4z" fill="#fff" /></svg></Slot>
        </TaskIcons>
        <Tray>
          <svg width="14" height="8" viewBox="0 0 14 8" {...line} strokeWidth="2"><path d="M1 7l6-6 6 6" /></svg>
          <TrayGroup>
            <svg width="20" height="16" viewBox="0 0 20 16" {...line} strokeWidth="1.500"><path d="M1 6q9-9 18 0M4 9q6-6 12 0M7 12q3-3 6 0" /><circle cx="10" cy="14" r="1.200" fill="#fff" /></svg>
            <svg width="20" height="17" viewBox="0 0 20 17" {...line} strokeWidth="1.400"><path d="M1 5.500h3.500L9 1.500v14l-4.500-4H1zM11.500 6q2 2.500 0 5M14 3.500q4 5 0 10M16.500 1q5.500 7.500 0 15" /></svg>
            <svg width="20" height="17" viewBox="0 0 20 17" {...line} strokeWidth="1.500"><path d="M6 3h9q2 0 2 2v8q0 2-2 2H3q-2 0-2-2v-3" /><path d="M18 7h2v4h-2zM3 13v-3l5-4v7z" fill="#fff" stroke="none" /><path d="M4 0L0 6h2.500L1 10l5-6H3.500z" fill="#fff" stroke="none" /></svg>
          </TrayGroup>
          <Clock>5:21 AM<br />5/16/2023</Clock>
          <svg width="18" height="19" viewBox="0 0 18 19" {...line} strokeWidth="1.500"><path d="M10 1.500Q3 1 3 8v4l-2 3h15l-2-3v-2M6 16q2.500 3.500 5 0M7 7h3.500L7 11.500h3.500M12 1h4l-4 5h4" /></svg>
        </Tray>
      </Taskbar>
    </Screen>
  );
}
